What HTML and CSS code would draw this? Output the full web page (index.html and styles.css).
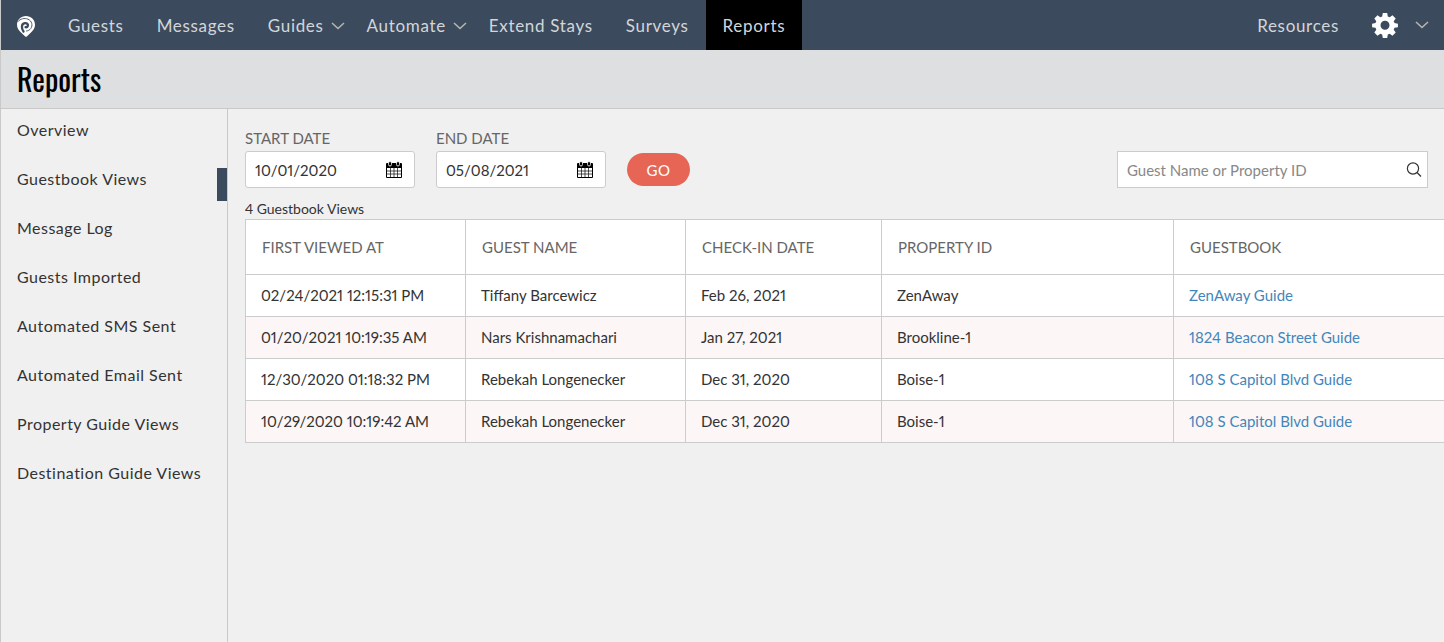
FILE: index.html
```html
<!DOCTYPE html>
<html lang="en">
<head>
<meta charset="UTF-8">
<title>Reports</title>
<meta name="viewport" content="width=device-width, initial-scale=1.0">
<link rel="stylesheet" href="styles.css">
</head>
<body>
<nav class="navbar">
    <a class="logo" href="#" aria-label="Home">
        <svg width="18" height="21" viewBox="0 0 18 21" fill="none" stroke="#3c4a5d" stroke-linecap="round">
            <path fill="#fff" stroke="none" d="M9 0c5 0 9 3.800 9 8.800 0 3.200-1.600 5.600-4 7.600L9.800 20.500q-.8.700-1.600 0L4 16.400C1.600 14.400 0 12 0 8.800 0 3.800 4 0 9 0z"/>
            <path d="M1 5.500C3.500 2.500 7.500 1.800 11 3.200c4 1.700 5 6.300 2.800 9.300-1.100 1.500-2.600 2.300-4.300 2.500" stroke-width=".9"/>
            <path d="M6.500 15.500C4.200 12.500 4.200 7.800 7.800 7.200c2.200-.4 3.600 1.200 3 2.800-.4 1-1.300 1.400-2.200 1.200" stroke-width="2.300"/>
        </svg>
    </a>
    <a href="#">Guests</a>
    <a href="#">Messages</a>
    <a href="#" class="drop">Guides <svg class="chevron" width="14" height="8" viewBox="0 0 14 8"><path d="M1 1l6 5.500L13 1"/></svg></a>
    <a href="#" class="drop">Automate <svg class="chevron" width="14" height="8" viewBox="0 0 14 8"><path d="M1 1l6 5.500L13 1"/></svg></a>
    <a href="#">Extend Stays</a>
    <a href="#">Surveys</a>
    <a href="#" class="active">Reports</a>
    <a href="#" class="resources">Resources</a>
    <a href="#" class="settings" aria-label="Settings">
        <svg width="26" height="26" viewBox="0 0 26 26">
            <path fill="#fff" fill-rule="evenodd" d="M10.800 1h4.400l.6 3.400 1.900.8 2.800-2 3.200 3.200-2 2.800.8 1.900 3.400.600v3.500l-3.400.6-.8 1.900 2 2.800-3.200 3.200-2.800-2-1.900.8-.6 3.400h-4.400l-.6-3.400-1.900-.8-2.800 2-3.200-3.200 2-2.800-.8-1.900-3.400-.6v-3.500l3.400-.6.8-1.900-2-2.800 3.200-3.200 2.800 2 1.900-.8zM13 8.700a4.500 4.500 0 1 0 0 9 4.500 4.500 0 0 0 0-9z"/>
        </svg>
        <svg class="chevron" width="14" height="8" viewBox="0 0 14 8"><path d="M1 1l6 5.500L13 1"/></svg>
    </a>
</nav>

<header class="page-header">
    <h1>Reports</h1>
</header>

<div class="layout">
    <aside class="sidebar">
        <a href="#">Overview</a>
        <a href="#" class="current">Guestbook Views</a>
        <a href="#">Message Log</a>
        <a href="#">Guests Imported</a>
        <a href="#">Automated SMS Sent</a>
        <a href="#">Automated Email Sent</a>
        <a href="#">Property Guide Views</a>
        <a href="#">Destination Guide Views</a>
    </aside>

    <main class="content">
        <form class="filters">
            <div class="field">
                <label for="start">START DATE</label>
                <div class="box">
                    <input type="text" id="start" value="10/01/2020">
                    <svg width="16" height="17" viewBox="0 0 16 17">
                        <rect y="2" width="16" height="15" rx="1"/>
                        <path fill="#fff" d="M1 7h14v9H1z"/>
                        <path stroke="#222" stroke-width=".8" d="M4.500 7v9M8 7v9M11.500 7v9M1 10h14M1 13h14"/>
                        <rect x="2.500" y=".5" width="3" height="4.500" rx="1.500" stroke="#fff" stroke-width=".8"/>
                        <rect x="10.500" y=".5" width="3" height="4.500" rx="1.500" stroke="#fff" stroke-width=".8"/>
                    </svg>
                </div>
            </div>
            <div class="field">
                <label for="end">END DATE</label>
                <div class="box">
                    <input type="text" id="end" value="05/08/2021">
                    <svg width="16" height="17" viewBox="0 0 16 17">
                        <rect y="2" width="16" height="15" rx="1"/>
                        <path fill="#fff" d="M1 7h14v9H1z"/>
                        <path stroke="#222" stroke-width=".8" d="M4.500 7v9M8 7v9M11.500 7v9M1 10h14M1 13h14"/>
                        <rect x="2.500" y=".5" width="3" height="4.500" rx="1.500" stroke="#fff" stroke-width=".8"/>
                        <rect x="10.500" y=".5" width="3" height="4.500" rx="1.500" stroke="#fff" stroke-width=".8"/>
                    </svg>
                </div>
            </div>
            <button type="button" class="go">GO</button>
            <div class="box search">
                <input type="text" placeholder="Guest Name or Property ID" aria-label="Guest Name or Property ID">
                <svg width="16" height="16" viewBox="0 0 16 16" fill="none" stroke="#333" stroke-width="1.200">
                    <circle cx="7" cy="6.500" r="5.600"/>
                    <path d="M11 10.500l4 4"/>
                </svg>
            </div>
        </form>

        <p class="count">4 Guestbook Views</p>
        <table>
            <colgroup>
                <col class="col-viewed">
                <col class="col-guest">
                <col class="col-checkin">
                <col class="col-property">
                <col>
            </colgroup>
            <thead>
                <tr><th>FIRST VIEWED AT</th><th>GUEST NAME</th><th>CHECK-IN DATE</th><th>PROPERTY ID</th><th>GUESTBOOK</th></tr>
            </thead>
            <tbody>
                <tr><td>02/24/2021 12:15:31 PM</td><td>Tiffany Barcewicz</td><td>Feb 26, 2021</td><td>ZenAway</td><td><a href="#">ZenAway Guide</a></td></tr>
                <tr><td>01/20/2021 10:19:35 AM</td><td>Nars Krishnamachari</td><td>Jan 27, 2021</td><td>Brookline-1</td><td><a href="#">1824 Beacon Street Guide</a></td></tr>
                <tr><td>12/30/2020 01:18:32 PM</td><td>Rebekah Longenecker</td><td>Dec 31, 2020</td><td>Boise-1</td><td><a href="#">108 S Capitol Blvd Guide</a></td></tr>
                <tr><td>10/29/2020 10:19:42 AM</td><td>Rebekah Longenecker</td><td>Dec 31, 2020</td><td>Boise-1</td><td><a href="#">108 S Capitol Blvd Guide</a></td></tr>
            </tbody>
        </table>
    </main>
</div>
</body>
</html>
```
FILE: styles.css
```css
* {
    box-sizing: border-box;
}
body {
    margin: 0;
    min-height: 100vh;
    display: flex;
    flex-direction: column;
    background: #f0f0f0;
    border-left: 1px solid #c9c9c9;
    color: #333;
    font-family: Lato, sans-serif;
    font-size: 15px;
    line-height: 20px;
}
a {
    color: #4286bb;
    text-decoration: none;
}

/* top nav */
.navbar {
    display: flex;
    height: 50px;
    background: #3c4a5d;
}
.navbar a {
    display: flex;
    align-items: center;
    padding: 2px 17px 0 16px;
    color: #d2d6da;
    font-size: 17px;
    letter-spacing: 0.04em;
}
.navbar .drop {
    gap: 7px;
    padding-right: 6px;
}
.navbar .active {
    padding-left: 17px;
    background: #000;
}
.navbar .resources {
    margin-left: auto;
}
.navbar .settings {
    gap: 17px;
    padding-top: 0;
    padding-right: 15px;
}
.chevron path {
    fill: none;
    stroke: #b5b5b0;
    stroke-width: 1.6;
}

.page-header {
    height: 59px;
    padding: 0 16px;
    background: #dedfe1;
    border-bottom: 1px solid #c9c9c9;
}
.page-header h1 {
    margin: 0;
    color: #000;
    font-family: Oswald, "Liberation Sans Narrow", "Open Sans Condensed", "Roboto Condensed", "Liberation Sans", sans-serif;
    font-size: 30px;
    font-weight: 400;
    line-height: 58px;
}

.layout {
    flex: 1;
    display: flex;
}
.sidebar {
    flex: none;
    width: 227px;
    padding: 4px 0 0 16px;
    border-right: 1px solid #c9c9c9;
}
.sidebar a {
    display: block;
    margin-bottom: 16px;
    color: #333;
    font-size: 16px;
    letter-spacing: 0.03em;
    line-height: 33px;
}
.sidebar .current {
    position: relative;
}
.sidebar .current::after {
    content: "";
    position: absolute;
    top: 6px;
    right: 0;
    width: 10px;
    height: 33px;
    background: #3c4a5d;
}

/* main area */
.content {
    flex: 1;
    min-width: 0;
    padding: 19px 0 0 17px;
}
.filters {
    display: flex;
    align-items: flex-end;
    gap: 21px;
    padding-right: 16px;
}
.field label {
    display: block;
    margin-bottom: 3px;
    color: #666;
}
.box {
    display: flex;
    align-items: center;
    width: 170px;
    height: 37px;
    padding: 0 12px 0 9px;
    background: #fff;
    border: 1px solid #ccc;
    border-radius: 3px;
}
.box input {
    flex: 1;
    min-width: 0;
    padding: 0;
    border: 0;
    outline: 0;
    background: none;
    color: #333;
    font: inherit;
    font-variant-numeric: proportional-nums;
}
.box input::placeholder {
    color: #888;
}
.search {
    width: 311px;
    margin-left: auto;
    padding: 0 5px 0 9px;
    border-radius: 0;
}
.go {
    width: 63px;
    height: 33px;
    margin-bottom: 2px;
    padding: 0;
    border: 0;
    border-radius: 17px;
    background: #e76555;
    color: #fff;
    font: inherit;
    letter-spacing: 0.04em;
}
.count {
    margin: 11px 0 0;
    font-size: 14px;
}

table {
    width: 100%;
    table-layout: fixed;
    border-collapse: collapse;
    background: #fff;
    font-variant-numeric: proportional-nums;
}
.col-viewed,
.col-guest {
    width: 220px;
}
.col-checkin {
    width: 196px;
}
.col-property {
    width: 292px;
}
th,
td {
    padding: 10px 15px 11px;
    border: 1px solid #ccc;
    text-align: left;
}
th {
    padding: 17px 16px;
    color: #666;
    font-weight: 400;
}
th:last-child,
td:last-child {
    border-right: 0;
}
tbody tr:nth-child(even) {
    background: #fcf6f6;
}
```
